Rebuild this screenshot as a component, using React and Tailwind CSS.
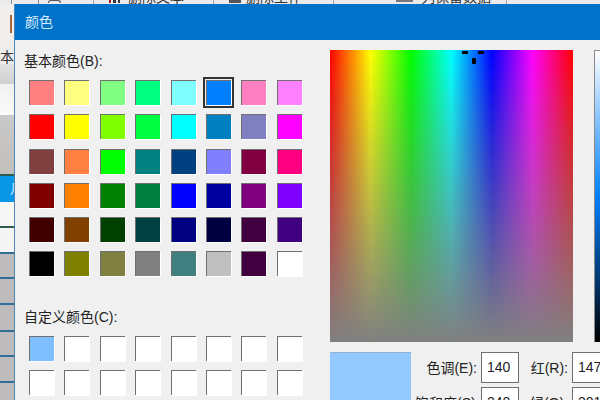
const basicColors = [
  "#ff8080", "#ffff80", "#80ff80", "#00ff80", "#80ffff", "#0080ff", "#ff80c0", "#ff80ff",
  "#ff0000", "#ffff00", "#80ff00", "#00ff40", "#00ffff", "#0080c0", "#8080c0", "#ff00ff",
  "#804040", "#ff8040", "#00ff00", "#008080", "#004080", "#8080ff", "#800040", "#ff0080",
  "#800000", "#ff8000", "#008000", "#008040", "#0000ff", "#0000a0", "#800080", "#8000ff",
  "#400000", "#804000", "#004000", "#004040", "#000080", "#000040", "#400040", "#400080",
  "#000000", "#808000", "#808040", "#808080", "#408080", "#c0c0c0", "#400040", "#ffffff",
];

const customColors = ["#80bfff", ...Array(15).fill("#ffffff")];

function Swatch({ color, selected }) {
  return (
    <div className={selected ? "relative h-[25px] w-[25px]" : "h-[25px] w-[25px]"}>
      <div
        className="h-full w-full border-t-[1.5px] border-l-[1.5px] border-t-[#707070] border-l-[#707070] shadow-[1px_1px_0_#ffffff]"
        style={{ backgroundColor: color }}
      />
      {selected && <div className="absolute -inset-[3px] border-2 border-[#333333]" />}
    </div>
  );
}

function ValueField({ label, value, labelWidth }) {
  return (
    <div className="flex items-center gap-[4px]">
      <span className={`${labelWidth} text-right text-[14px] leading-none whitespace-nowrap text-[#222222]`}>{label}</span>
      <div className="flex h-[31px] w-[38px] shrink-0 items-center border border-[#6f6f6f] bg-white pl-[5px] text-[14px] text-[#222222]">
        {value}
      </div>
    </div>
  );
}

function ClippedLabel({ children }) {
  return (
    <div className="h-[4px] overflow-hidden whitespace-nowrap">
      <div className="-mt-[10px] text-[14px] leading-[14px]">{children}</div>
    </div>
  );
}

export default function App() {
  return (
    <div
      className="flex h-[400px] w-[600px] flex-col overflow-hidden bg-[#f0f0f0]"
      style={{ fontFamily: '"Liberation Sans", "Noto Sans CJK SC", sans-serif' }}
    >
      {/* toolbar behind the dialog, only its bottom edge shows */}
      <div className="flex h-[4px] shrink-0 bg-[#ebebeb] text-[#333333]">
        <div className="w-[12px] border-r border-[#8a8a8a]" />
        <div className="w-[27px] border-r border-[#8a8a8a]" />
        <div className="w-[55px] border-r border-[#a5a5a5] pl-[9px]">
          <div className="h-[3px] w-[13px] rounded-t-full border-x border-t border-[#555555]" />
        </div>
        <div className="flex w-[120px] gap-[8px] border-r border-[#a5a5a5] pl-[15px]">
          <div className="flex h-[3px] w-[11px] gap-[2px]">
            <div className="w-[3px] bg-[#9c1c1c]" />
            <div className="w-[3px] bg-[#333333]" />
            <div className="w-[3px] bg-[#333333]" />
          </div>
          <ClippedLabel>删除文本</ClippedLabel>
        </div>
        <div className="flex w-[120px] gap-[5px] border-r border-[#a5a5a5] pl-[15px]">
          <div className="h-[3px] w-[12px] bg-[#555555]" />
          <ClippedLabel>删除工作</ClippedLabel>
        </div>
        <div className="flex w-[173px] gap-[8px] border-r border-[#a5a5a5] pl-[62px]">
          <div className="h-[2px] w-[17px] bg-[#777777]" />
          <ClippedLabel>列保留数据</ClippedLabel>
        </div>
      </div>

      <div className="flex min-h-0 flex-1">
        {/* sheet behind the dialog */}
        <div className="flex w-[14px] shrink-0 flex-col overflow-hidden bg-[#ececec] text-[14px] leading-none text-[#333333]">
          <div className="flex h-[44px] shrink-0 justify-end bg-[#f0efed] pt-[11px] pr-[2px]">
            <div className="h-[18px] w-[2px] bg-[#a8683a]" />
          </div>
          <div className="h-[16px] shrink-0 overflow-hidden pt-[2px]">本</div>
          <div className="h-[20px] shrink-0 bg-[linear-gradient(to_bottom,#e2e2e2,#cfcfcf)]" />
          <div className="h-[31px] shrink-0 bg-[linear-gradient(to_bottom,#f1f1f3,#fbfbfb)]" />
          <div className="h-[61px] shrink-0 border-b-2 border-[#2e5a50] bg-[linear-gradient(to_bottom,#c9c9c9,#c2bfbb)]" />
          <div className="h-[26px] shrink-0 overflow-hidden bg-[#0a96e6] pt-[6px] pl-[10px] text-[13px] whitespace-nowrap text-[#cfeeff]">月</div>
          <div className="h-[26px] shrink-0 border-b-2 border-[#2e5a50] bg-[#f7f7f7]" />
          <div className="h-[26px] shrink-0 border-b-2 border-[#2d6f96] bg-[#f5f5f5]" />
          <div className="h-[25px] shrink-0 border-b-2 border-[#2d6f96] bg-[#bdbbbb]" />
          <div className="h-[26px] shrink-0 border-b-2 border-[#2d6f96] bg-[#bdbbbb]" />
          <div className="h-[27px] shrink-0 border-b-2 border-[#2d6f96] bg-[#bdbbbb]" />
          <div className="h-[25px] shrink-0 border-b-2 border-[#2d6f96] bg-[#bdbbbb]" />
          <div className="h-[26px] shrink-0 border-b-2 border-[#2d6f96] bg-[#bdbbbb]" />
          <div className="flex-1 bg-[#bdbbbb]" />
        </div>

        {/* colour dialog */}
        <div className="flex min-w-0 flex-1 flex-col border-l border-[#4a86b8] bg-[#f0f0f0]">
          <div className="flex h-[36px] shrink-0 items-center bg-[#0072c9] pl-[10px] text-[14px] text-[#d7ecfb]">
            颜色
          </div>

          <div className="flex min-h-0 flex-1 overflow-hidden">
            <div className="w-[315px] shrink-0 pl-[14px]">
              <div className="mt-[14px] -ml-[5px] text-[14px] leading-none text-[#222222]">基本颜色(B):</div>
              <div className="mt-[12px] grid grid-cols-[repeat(8,25px)] gap-x-[10.4px] gap-y-[9.3px]">
                {basicColors.map((color, i) => (
                  <Swatch key={i} color={color} selected={i === 5} />
                ))}
              </div>
              <div className="mt-[34px] -ml-[5px] text-[14px] leading-none text-[#222222]">自定义颜色(C):</div>
              <div className="mt-[11.5px] grid grid-cols-[repeat(8,25px)] gap-x-[10.4px] gap-y-[9.3px]">
                {customColors.map((color, i) => (
                  <Swatch key={i} color={color} />
                ))}
              </div>
            </div>

            <div className="min-w-0 flex-1 pt-[10px]">
              <div className="flex">
                <div className="relative h-[292px] w-[243px] shrink-0 bg-[linear-gradient(to_bottom,rgba(128,128,128,0),#808080),linear-gradient(to_right,#ff0000,#ffff00,#00ff00,#00ffff,#0000ff,#ff00ff,#ff0000)]">
                  {/* crosshair */}
                  <div className="absolute top-[1px] left-[132px] h-[3px] w-[6px] rounded-[1px] bg-black" />
                  <div className="absolute top-[1px] left-[148px] h-[3px] w-[6px] rounded-[1px] bg-black" />
                  <div className="absolute top-[8px] left-[142px] h-[6px] w-[4px] rounded-[1px] bg-black" />
                </div>
                <div className="ml-[21px] h-[292px] w-[20px] shrink-0 border-t border-l border-[#8a8a8a] bg-[linear-gradient(to_bottom,#ffffff,#0080ff_50%,#000000)]" />
              </div>
              <div className="mt-[10px] flex">
                <div className="h-[60px] w-[81px] shrink-0 border-t border-[#8fb4d8] bg-[#93c9ff]" />
                <div className="ml-[4px] flex flex-col gap-[4px]">
                  <ValueField label="色调(E):" value="140" labelWidth="w-[62px]" />
                  <ValueField label="饱和度(S):" value="240" labelWidth="w-[62px]" />
                </div>
                <div className="ml-[4px] flex flex-col gap-[4px]">
                  <ValueField label="红(R):" value="147" labelWidth="w-[45px]" />
                  <ValueField label="绿(G):" value="201" labelWidth="w-[45px]" />
                </div>
              </div>
            </div>
          </div>
        </div>
      </div>
    </div>
  );
}
